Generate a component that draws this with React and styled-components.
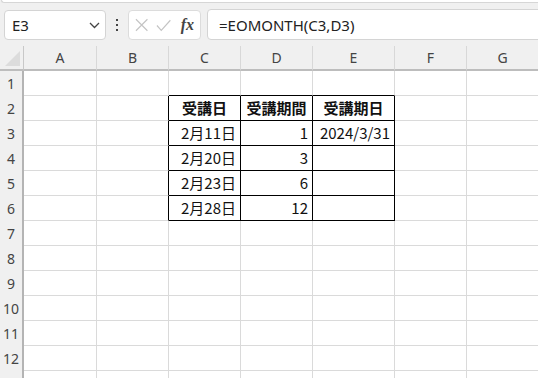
import React from "react";
import styled, { createGlobalStyle } from "styled-components";

const GlobalStyle = createGlobalStyle`
  html, body {
    margin: 0;
    padding: 0;
    background: #f0f0f0;
    overflow: hidden;
  }
  body {
    width: 538px;
    height: 378px;
  }
`;

const Sheet = styled.div`
  width: 538px;
  height: 378px;
  overflow: hidden;
  background: #f0f0f0;
  font-family: "Noto Sans", "Noto Sans CJK JP", sans-serif;
`;

const RibbonEdge = styled.div`
  height: 2px;
  margin: 0 0 0 1px;
  background: #ffffff;
  border-bottom: 1px solid #d6d6d6;
  border-left: 1px solid #d6d6d6;
  border-bottom-left-radius: 4px;
`;

const FormulaBar = styled.div`
  display: flex;
  align-items: center;
  height: 31px;
  padding: 6px 0 0 4px;
`;

const NameBox = styled.div`
  box-sizing: border-box;
  width: 102px;
  height: 30px;
  margin-top: 1px;
  display: flex;
  align-items: center;
  justify-content: space-between;
  padding: 0 5px 0 7px;
  background: #fff;
  border: 1px solid #d4d4d4;
  border-radius: 4px;
  font-size: 15px;
  color: #222;
`;

const Dots = styled.div`
  width: 22px;
  display: flex;
  flex-direction: column;
  align-items: center;
  gap: 3px;

  span {
    width: 2px;
    height: 2px;
    background: #444;
  }
`;

const FxBox = styled.div`
  box-sizing: border-box;
  width: 73px;
  height: 30px;
  margin-top: 1px;
  display: flex;
  align-items: center;
  gap: 8px;
  padding: 0 6px;
  background: #fff;
  border: 1px solid #dcdcdc;
  border-radius: 4px;
`;

const Fx = styled.span`
  font-family: "Liberation Serif", serif;
  font-style: italic;
  font-weight: bold;
  font-size: 16px;
  color: #444;
  margin-left: 1px;
`;

const FormulaInput = styled.div`
  box-sizing: border-box;
  flex: 1;
  height: 31px;
  margin-left: 6px;
  margin-right: -10px;
  display: flex;
  align-items: center;
  padding-left: 11px;
  background: #fff;
  border: 1px solid #d4d4d4;
  border-radius: 4px;
  font-size: 15px;
  color: #222;
`;

const Grid = styled.div`
  display: grid;
  grid-template-columns: 24px 73px 72px 72px 72px 82px 72px 72px 72px;
  grid-auto-rows: 25px;
  margin-top: 6px;
  background: #fff;
`;

const Corner = styled.div`
  position: relative;
  background: #f0f0f0;
  border-right: 1px solid #c8c8c8;
  border-bottom: 2px solid #bdbdbd;
  box-sizing: border-box;

  &::after {
    content: "";
    position: absolute;
    right: 3px;
    bottom: 3px;
    width: 0;
    height: 0;
    border-left: 15px solid transparent;
    border-bottom: 15px solid #dcdcdc;
  }
`;

const ColHead = styled.div`
  box-sizing: border-box;
  display: flex;
  align-items: center;
  justify-content: center;
  background: #f0f0f0;
  border-right: 1px solid #d8d8d8;
  border-bottom: 2px solid #bdbdbd;
  font-family: "Noto Sans", sans-serif;
  font-size: 14px;
  color: #444;
`;

const RowHead = styled.div`
  box-sizing: border-box;
  display: flex;
  align-items: center;
  justify-content: center;
  background: #f0f0f0;
  border-right: 2px solid #b4b4b4;
  font-family: "Noto Sans", sans-serif;
  font-size: 14px;
  color: #444;
`;

const Cell = styled.div`
  box-sizing: border-box;
  display: flex;
  align-items: center;
  justify-content: ${(p) => (p.$align === "center" ? "center" : "flex-end")};
  padding: 0 4px 1px 4px;
  background: #fff;
  border-right: 1px solid ${(p) => (p.$boxR ? "#000" : "#dadada")};
  border-bottom: 1px solid ${(p) => (p.$boxB ? "#000" : "#dadada")};
  font-family: "Noto Sans CJK JP", sans-serif;
  font-size: 15px;
  font-weight: ${(p) => (p.$bold ? 700 : 400)};
  color: #111;
  white-space: nowrap;
`;

const columns = ["A", "B", "C", "D", "E", "F", "G"];

const table = {
  2: ["受講日", "受講期間", "受講期日"],
  3: ["2月11日", "1", "2024/3/31"],
  4: ["2月20日", "3", ""],
  5: ["2月23日", "6", ""],
  6: ["2月28日", "12", ""],
};

const inTable = (r, c) => r >= 2 && r <= 6 && c >= 2 && c <= 4;

const App = () => {
  const rows = Array.from({ length: 13 }, (_, i) => i + 1);

  return (
    <Sheet>
      <GlobalStyle />
      <RibbonEdge />
      <FormulaBar>
        <NameBox>
          E3
          <svg width="11" height="7" viewBox="0 0 11 7">
            <path d="M1 1l4.5 4.5L10 1" fill="none" stroke="#444" strokeWidth="1.3" />
          </svg>
        </NameBox>
        <Dots>
          <span />
          <span />
          <span />
        </Dots>
        <FxBox>
          <svg width="14" height="14" viewBox="0 0 14 14">
            <path d="M1 1l12 12M13 1L1 13" stroke="#c4c4c4" strokeWidth="1.2" />
          </svg>
          <svg width="16" height="13" viewBox="0 0 16 13">
            <path d="M1 6.5l4.5 5L15 1" fill="none" stroke="#c4c4c4" strokeWidth="1.2" />
          </svg>
          <Fx>fx</Fx>
        </FxBox>
        <FormulaInput>=EOMONTH(C3,D3)</FormulaInput>
      </FormulaBar>

      <Grid>
        <Corner />
        {columns.map((c) => (
          <ColHead key={c}>{c}</ColHead>
        ))}
        <ColHead />
        {rows.map((r) => (
          <React.Fragment key={r}>
            <RowHead>{r < 13 ? r : ""}</RowHead>
            {columns.map((_, c) => {
              const inside = inTable(r, c);
              const text = inside ? table[r][c - 2] : "";
              return (
                <Cell
                  key={c}
                  $boxR={inside || (c === 1 && r >= 2 && r <= 6)}
                  $boxB={inside || (r === 1 && c >= 2 && c <= 4)}
                  $align={r === 2 ? "center" : "right"}
                  $bold={r === 2}
                >
                  {text}
                </Cell>
              );
            })}
            <Cell />
          </React.Fragment>
        ))}
      </Grid>
    </Sheet>
  );
};

export default App;
